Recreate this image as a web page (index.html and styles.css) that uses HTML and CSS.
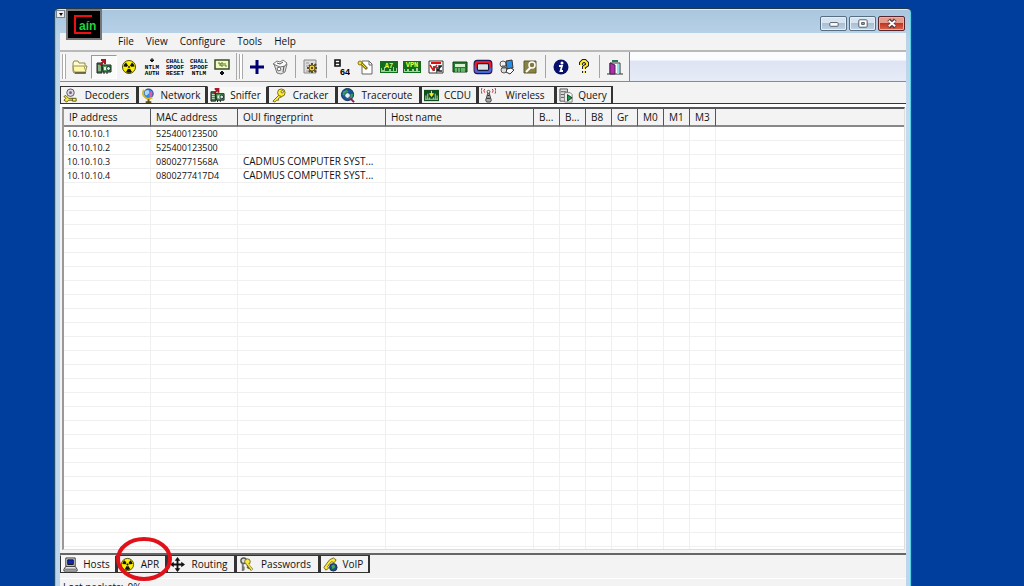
FILE: index.html
```html
<!DOCTYPE html>
<html lang="en">
<head>
<meta charset="utf-8">
<title>Cain</title>
<link rel="stylesheet" href="styles.css">
</head>
<body>
<svg class="defs" aria-hidden="true">
  <symbol id="folder" viewBox="0 0 16 16"><path d="M1 4l1-2h4l1 2h6v3h2l-2 7H2L1 12z" fill="#fffbd0" stroke="#8c8648"/><path d="M2 13L1 7h11l2 6z" fill="#fff8a4" stroke="#99945c"/><path d="M14 14H3" stroke="#222"/></symbol>
  <symbol id="sniffer" viewBox="0 0 16 16"><path d="M1 4h5v10H1z" fill="#3c7a47" stroke="#222"/><path d="M6 6h9v7H7z" fill="#4f9c58" stroke="#102d14"/><path d="M2 7h3M2 9h3M2 11h3" stroke="#d5ead5"/><path d="M8 8h3v3H8z" fill="#e6f3e6"/><circle cx="12.500" cy="9.500" r="2" fill="#d4edd4" stroke="#123"/><path d="M8 13v2M11 13v2" stroke="#111"/><path d="M4 6l4-4M5 1h4v4" fill="none" stroke="#a81622" stroke-width="2"/></symbol>
  <symbol id="nuke" viewBox="0 0 16 16"><circle cx="8" cy="8" r="6.500" fill="#fff200" stroke="#494900"/><path d="M8 8L2.500 7.500A6 6 0 0 1 5 3.500zM8 8l3-4.500a6 6 0 0 1 2.500 4zM8 8l3 5a6 6 0 0 1-6 0z" fill="#111"/><circle cx="8" cy="8" r="1.500" fill="#111" stroke="#fff200"/></symbol>
  <symbol id="board" viewBox="0 0 16 16"><path d="M1 1h14v9H1z" fill="#f3f9c1" stroke="#365026" stroke-width="1.500"/><path d="M4 4h2v3M7 4h2v3H7zM11 4v3h2" fill="none" stroke="#58772e"/><path d="M8 12l2 2-2 2-2-2z" fill="#111" stroke="#111"/></symbol>
  <symbol id="plus" viewBox="0 0 16 16"><path d="M8 1v14M1 8h14" stroke="#000072" stroke-width="3"/></symbol>
  <symbol id="bin" viewBox="0 0 16 16"><path d="M2 5l3 9 4 1 4-2 2-8z" fill="#e4e4e4" stroke="#777"/><path d="M1 5l4-3 3 1 3-2 4 3-2 3-5 1z" fill="#fafafa" stroke="#777"/><path d="M5 4l3 1 3-2M12 7l-1 6" stroke="#555" fill="none"/><path d="M5 9l3-1 1 3-3 1z" fill="#fff" stroke="#6b776b"/></symbol>
  <symbol id="config" viewBox="0 0 16 16"><path d="M1 1h12v13H1z" fill="#ddd" stroke="#888"/><path d="M3 4h3M3 7h2M3 12h3" stroke="#999"/><path d="M9 4v10M4 9h10M6 6l7 7M13 5l-7 8" stroke="#514b2d" stroke-width="2"/><circle cx="9" cy="9" r="3" fill="#f1cf35" stroke="#695719"/><circle cx="9" cy="9" r="1" fill="#222"/></symbol>
  <symbol id="keydoc" viewBox="0 0 16 16"><path d="M5 2h7l3 3v10H5z" fill="#fff" stroke="#666"/><path d="M12 2v4h3" fill="none" stroke="#666"/><path d="M4 4l6 6" stroke="#83751a" stroke-width="3"/><path d="M4 4l5 5" stroke="#f5df36"/><circle cx="3" cy="4" r="2" fill="#f5df36" stroke="#83751a"/></symbol>
  <symbol id="vnc" viewBox="0 0 16 16"><path d="M1 2h14v12H1z" fill="#fff" stroke="#333"/><path d="M3 4h10" stroke="#d11" stroke-width="2"/><path d="M6 7v5M9 8v4l4-5M14 7h-3v5h3" fill="none" stroke="#222" stroke-width="1.500"/><path d="M2 6l3 5 4-5" stroke="#d11" fill="none" stroke-width="1.500"/></symbol>
  <symbol id="token" viewBox="0 0 16 16"><path d="M1 3h14v10H1z" fill="#198229" stroke="#163b1b"/><path d="M3 5h10v3H3z" fill="#d7f0ce"/><path d="M3 10h2M6 10h2M9 10h4M3 12h2M6 12h2M9 12h4" stroke="#bde4b6"/></symbol>
  <symbol id="secur" viewBox="0 0 18 16"><rect x="1" y="2" width="16" height="12" rx="3" fill="#ef1827" stroke="#17175c"/><path d="M1.500 6v5q0 2.500 3 2.500h9q3 0 3-2.500V8L14 11H4z" fill="#4468df"/><rect x="4" y="5" width="10" height="6" rx="1" fill="#d8e3e4" stroke="#16193c"/></symbol>
  <symbol id="remote" viewBox="0 0 16 16"><circle cx="4" cy="5" r="3" fill="#eee" stroke="#555"/><circle cx="5" cy="11" r="3" fill="#ddd" stroke="#555"/><path d="M3 7h4M3 9h4" stroke="#555"/><path d="M7 2l6-1 1 8-6 1z" fill="#268de9" stroke="#333"/><path d="M8 10l4-1 3 2-4 4-4-2z" fill="#fff" stroke="#333"/></symbol>
  <symbol id="keybox" viewBox="0 0 16 16"><path d="M2 2h12v12H2z" fill="#898342" stroke="#5e5a2b"/><path d="M9 8l-5 5" stroke="#fff" stroke-width="2"/><circle cx="10" cy="6" r="3" fill="#817b3e" stroke="#fff" stroke-width="1.500"/></symbol>
  <symbol id="info" viewBox="0 0 16 16"><circle cx="8" cy="8" r="7.500" fill="#07116c"/><circle cx="9" cy="4" r="1.500" fill="#fff"/><path d="M6 7h3l-1.500 5H10" fill="none" stroke="#fff" stroke-width="1.800"/></symbol>
  <symbol id="help" viewBox="0 0 16 16"><path d="M5 6V4l2-2h2l2 2v2L8 8v2M8 12v2" fill="none" stroke="#222" stroke-width="4"/><path d="M5 6V4l2-2h2l2 2v2L8 8v2M8 12v2" fill="none" stroke="#ffe832" stroke-width="2"/></symbol>
  <symbol id="exit" viewBox="0 0 16 16"><path d="M0 15h16M3 15V4h10v11" fill="#fff" stroke="#333"/><path d="M3 4l5 2v9H3z" fill="#b329b4" stroke="#462646"/><path d="M5 1h6v2H5z" fill="#28765a"/><path d="M10 5h2v10h-2z" fill="#91e1e8"/></symbol>
  <symbol id="decoder" viewBox="0 0 16 16"><circle cx="8" cy="5" r="4" fill="#d9d9df" stroke="#555"/><circle cx="8" cy="5" r="1.500" fill="#7e4aad"/><path d="M3 8l3 3h5v2H6l-2 2-3-2 2-2-2-2z" fill="#ffea31" stroke="#5c5517"/><path d="M10 11h4v3h-4z" fill="#ffee4b" stroke="#5c5517"/></symbol>
  <symbol id="network" viewBox="0 0 16 16"><circle cx="8" cy="6" r="5" fill="#3985ec" stroke="#26337a"/><path d="M4 3l4-1 1 3-3 3-2-1z" fill="#a9dcf4"/><path d="M9 5l3-2v5l-3 2z" fill="#e45aa5"/><path d="M3 2C0 8 6 14 12 10" fill="none" stroke="#d2ba28" stroke-width="2"/><path d="M8 12v3M5 15h6" stroke="#5d5017" stroke-width="2"/></symbol>
  <symbol id="cracker" viewBox="0 0 16 16"><path d="M9 7l-7 7 2 1 2-2h2v-2l4-2" fill="#ffee39" stroke="#726819"/><circle cx="11" cy="5" r="4" fill="#ffed37" stroke="#726819"/><circle cx="12" cy="4" r="1.300" fill="#fff" stroke="#726819"/></symbol>
  <symbol id="trace" viewBox="0 0 16 16"><circle cx="8" cy="7" r="6.500" fill="#17559a" stroke="#172e54"/><path d="M3 4l4-2 2 2-2 3-4 1zM10 7l4-1-1 5-3 1z" fill="#31a551"/><circle cx="8" cy="8" r="3" fill="#d7f4ff" stroke="#283764"/><path d="M11 11l4 4" stroke="#8e174d" stroke-width="2"/></symbol>
  <symbol id="ccdu" viewBox="0 0 16 16"><path d="M0 2h16v12H0z" fill="#114e1d"/><path d="M2 12V8M4 12V6M6 12v-2M10 12v-2M12 12V6M14 12V8M1 12h14" stroke="#b6dba8"/><path d="M8 3v4M6 6l2 3 2-3z" fill="#ffed2d" stroke="#ffed2d"/></symbol>
  <symbol id="wireless" viewBox="0 0 16 16"><path d="M4 1L3 3l1 2M1 0L0 3l1 3M12 1l1 2-1 2M15 0l1 3-1 3" fill="none" stroke="#cc2028"/><path d="M8 3l3 10-1 2H6l-1-2z" fill="#aaa" stroke="#444"/><circle cx="8" cy="4" r="1.500" fill="#fff" stroke="#444"/><path d="M7 8h2M6 11h4" stroke="#222"/></symbol>
  <symbol id="query" viewBox="0 0 16 16"><path d="M1 1h8v13H1z" fill="#ddd" stroke="#555"/><path d="M2 4h6M2 7h6M2 10h4" stroke="#555"/><path d="M6 5h6l2 2v8H6z" fill="#fafafa" stroke="#777"/><path d="M9 7v7l5-3.500z" fill="#149a45" stroke="#143d20"/></symbol>
  <symbol id="host" viewBox="0 0 16 16"><path d="M3 1h10v9H3z" fill="#ddd" stroke="#333"/><path d="M5 3h6v5H5z" fill="#0b28c7" stroke="#111"/><path d="M3 10h10l2 3v2H1v-2z" fill="#e3e3e3" stroke="#333"/><path d="M2 13h12" stroke="#555"/></symbol>
  <symbol id="route" viewBox="0 0 16 16"><path d="M8 2v12M2 8h12" stroke="#111" stroke-width="2"/><path d="M8 0l3 4H5zM8 16l3-4H5zM0 8l4-3v6zM16 8l-4-3v6z" fill="#111"/></symbol>
  <symbol id="keys" viewBox="0 0 16 16"><circle cx="5" cy="4" r="3" fill="#ddd" stroke="#555" stroke-width="1.500"/><path d="M4 7v8M4 11h2M4 13h2" stroke="#777" stroke-width="2"/><circle cx="9" cy="5" r="3" fill="#f7e648" stroke="#70671d"/><path d="M9 8l5 6M11 10l-2 2" stroke="#70671d" stroke-width="3"/><path d="M9 7l5 7" stroke="#fff04b" stroke-width="1.500"/></symbol>
  <symbol id="phone" viewBox="0 0 16 16"><circle cx="11" cy="11" r="4" fill="#174b9a" stroke="#172b51"/><path d="M9 9l3-1 1 3-3 2z" fill="#3cad47"/><path d="M1 11l6-8 4-2 3 2-2 3-3-1-4 5 1 2-3 2z" fill="#ffec31" stroke="#6e661f"/></symbol>
</svg>

<main class="window">
  <header class="title">
    <button class="sysmenu" aria-label="System menu"></button>
    <svg class="logo" viewBox="0 0 36 31" role="img" aria-label="Cain"><path d="M1 1h34v29H1z" fill="#000" stroke="#777" stroke-width="2"/><path d="M26 7H9v17h16" fill="none" stroke="#ee1010" stroke-width="2"/><text x="13" y="21" class="logotext">aín</text></svg>
    <button class="control" aria-label="Minimize"><svg viewBox="0 0 26 14"><rect x="9" y="6" width="9" height="4" rx="1" fill="#fff" stroke="#4b5560"/></svg></button>
    <button class="control" aria-label="Maximize"><svg viewBox="0 0 26 14"><rect x="9" y="3" width="9" height="8" rx="1" fill="#fff" stroke="#4b5560"/><path d="M12 6h3v2h-3z" fill="#9eb1c5" stroke="#4b5560"/></svg></button>
    <button class="control close" aria-label="Close"><svg viewBox="0 0 26 14"><path d="M10 3l7 8M17 3l-7 8" stroke="#583939" stroke-width="4"/><path d="M10 4l7 6M17 4l-7 6" stroke="#fff" stroke-width="2"/></svg></button>
  </header>
  <div class="client">
    <nav class="menu" aria-label="Main"><button>File</button><button>View</button><button>Configure</button><button>Tools</button><button>Help</button></nav>
    <div class="toolbar">
      <div class="bar">
        <span class="grip"></span>
        <div class="group seven">
          <button aria-label="Open"><svg><use href="#folder"/></svg></button><button class="pressed" aria-label="Sniffer"><svg><use href="#sniffer"/></svg></button><button aria-label="APR"><svg><use href="#nuke"/></svg></button><button aria-label="NTLM auth"><svg class="wide" viewBox="0 0 20 18"><path d="M10 0v4M8 2h4l-2 2z" stroke="#111" fill="#111"/><text x="10" y="11" class="micro">NTLM</text><text x="10" y="17" class="micro">AUTH</text></svg></button><button aria-label="Challenge reset"><svg class="wide" viewBox="0 0 20 18"><text x="10" y="5" class="micro">CHALL</text><text x="10" y="11" class="micro">SPOOF</text><text x="10" y="17" class="micro">RESET</text></svg></button><button aria-label="Challenge NTLM"><svg class="wide" viewBox="0 0 20 18"><text x="10" y="5" class="micro">CHALL</text><text x="10" y="11" class="micro">SPOOF</text><text x="10" y="17" class="micro">NTLM</text></svg></button><button aria-label="Filter"><svg><use href="#board"/></svg></button>
        </div>
        <span class="line"></span><span class="grip second"></span>
        <div class="group two"><button aria-label="Add"><svg><use href="#plus"/></svg></button><button aria-label="Remove"><svg><use href="#bin"/></svg></button></div>
        <span class="sep"></span>
        <div class="group one"><button aria-label="Configure"><svg><use href="#config"/></svg></button></div>
        <span class="sep"></span>
        <div class="group nine">
          <button aria-label="Base64"><svg viewBox="0 0 16 16"><path d="M1 1h5v6H1zM1 4h5" fill="#fff" stroke="#111" stroke-width="1.600"/><text x="11" y="16" class="sixty">64</text></svg></button><button aria-label="Access decoder"><svg><use href="#keydoc"/></svg></button><button aria-label="Cisco type 7"><svg class="wide" viewBox="0 0 20 18"><path d="M1 3h18v12H1z" fill="#116d1b"/><path d="M2 14v-4h1v2h2v-3h1v4h4v-2h2v2h2V9h1v4h2v-3h1v4z" fill="#9dce98"/><text x="10" y="10" class="chip">A7</text></svg></button><button aria-label="VPN"><svg class="wide" viewBox="0 0 20 18"><path d="M1 3h18v12H1z" fill="#116d1b"/><path d="M2 14v-3h1v2h2v-2h2v2h3v-2h2v2h2v-3h2v3h2v1z" fill="#a8d39d"/><text x="10" y="9" class="chip">VPN</text></svg></button><button aria-label="VNC"><svg><use href="#vnc"/></svg></button><button aria-label="Token"><svg><use href="#token"/></svg></button><button aria-label="SecurID"><svg class="wide"><use href="#secur"/></svg></button><button aria-label="Remote desktop"><svg><use href="#remote"/></svg></button><button aria-label="Syskey"><svg><use href="#keybox"/></svg></button>
        </div>
        <span class="sep"></span>
        <div class="group two"><button aria-label="About"><svg><use href="#info"/></svg></button><button aria-label="Help"><svg><use href="#help"/></svg></button></div>
        <span class="sep"></span>
        <div class="group one"><button aria-label="Exit"><svg><use href="#exit"/></svg></button></div>
      </div>
    </div>
    <nav class="tabs top" aria-label="Tools">
      <button class="xl"><svg><use href="#decoder"/></svg><span>Decoders</span></button><button class="md"><svg><use href="#network"/></svg><span>Network</span></button><button class="sm active"><svg><use href="#sniffer"/></svg><span>Sniffer</span></button><button class="md"><svg><use href="#cracker"/></svg><span>Cracker</span></button><button class="xxl"><svg><use href="#trace"/></svg><span>Traceroute</span></button><button class="xs"><svg><use href="#ccdu"/></svg><span>CCDU</span></button><button class="xl"><svg><use href="#wireless"/></svg><span>Wireless</span></button><button class="xs"><svg><use href="#query"/></svg><span>Query</span></button>
    </nav>
    <section class="list">
      <table>
        <colgroup><col class="c-host"><col class="c-host"><col class="c-long"><col class="c-long"><col class="c-flag"><col class="c-flag"><col class="c-flag"><col class="c-flag"><col class="c-flag"><col class="c-flag"><col class="c-flag"><col></colgroup>
        <thead><tr><th>IP address</th><th>MAC address</th><th>OUI fingerprint</th><th>Host name</th><th>B...</th><th>B...</th><th>B8</th><th>Gr</th><th>M0</th><th>M1</th><th>M3</th><th></th></tr></thead>
        <tbody>
          <tr><td class="num">10.10.10.1</td><td class="num">525400123500</td><td></td><td></td><td></td><td></td><td></td><td></td><td></td><td></td><td></td><td></td></tr>
          <tr><td class="num">10.10.10.2</td><td class="num">525400123500</td><td></td><td></td><td></td><td></td><td></td><td></td><td></td><td></td><td></td><td></td></tr>
          <tr><td class="num">10.10.10.3</td><td class="num">08002771568A</td><td>CADMUS COMPUTER SYST...</td><td></td><td></td><td></td><td></td><td></td><td></td><td></td><td></td><td></td></tr>
          <tr><td class="num">10.10.10.4</td><td class="num">0800277417D4</td><td>CADMUS COMPUTER SYST...</td><td></td><td></td><td></td><td></td><td></td><td></td><td></td><td></td><td></td></tr>
          <tr class="rest"><td></td><td></td><td></td><td></td><td></td><td></td><td></td><td></td><td></td><td></td><td></td><td></td></tr>
        </tbody>
      </table>
    </section>
    <nav class="tabs bottom" aria-label="Sniffer views">
      <button class="xs active"><svg><use href="#host"/></svg><span>Hosts</span></button><button class="tiny marked"><svg><use href="#nuke"/></svg><span>APR</span><svg class="ring" viewBox="0 0 58 46"><ellipse cx="29" cy="23" rx="26" ry="20" fill="none" stroke="#e01119" stroke-width="4"/></svg></button><button class="md"><svg><use href="#route"/></svg><span>Routing</span></button><button class="xxl"><svg><use href="#keys"/></svg><span>Passwords</span></button><button class="tiny"><svg><use href="#phone"/></svg><span>VoIP</span></button>
    </nav>
    <footer class="status"><span>Lost packets:</span><span>0%</span></footer>
  </div>
</main>
</body>
</html>
```
FILE: styles.css
```css
* { box-sizing: border-box; }
body { margin: 0; height: 100vh; overflow: hidden; background: #003e9e; color: #111; font: 10px/14px "Open Sans", "Noto Sans", sans-serif; }
button { margin: 0; padding: 0; border: 0; background: transparent; color: inherit; font: inherit; }
svg { display: block; flex: none; width: 16px; height: 16px; }
.defs { position: absolute; width: 0; height: 0; }
.micro { font: bold 6px "Liberation Mono", monospace; text-anchor: middle; }
.chip { font: bold 7px "Liberation Mono", monospace; fill: #eaff38; text-anchor: middle; }
.sixty { font: bold 9px "Liberation Sans", sans-serif; text-anchor: middle; }
.logotext { font: bold 12px "Liberation Sans", sans-serif; fill: #20d43b; }

.window { display: flex; flex-direction: column; height: 100vh; margin: 8px 112px 0 54px; padding: 0 5px; border: 1px solid #1c4c70; border-top-color: #243848; border-radius: 5px 5px 0 0; background: linear-gradient(#a9c6de, #bad3e9 30px, #c5dbef 110px, #bcd6ed); box-shadow: inset 1px 0 #78c8ed, inset -1px 0 #54d0e8, inset 0 1px #dceaf6; }
.title { position: relative; display: flex; flex: none; align-items: center; justify-content: flex-end; gap: 2px; height: 24px; padding: 5px 1px 0; }
.sysmenu { position: absolute; left: -4px; top: 1px; width: 9px; height: 8px; border: 1px solid #76838e; background: #eee; }
.sysmenu::after { content: ""; display: block; width: 0; margin: auto; border: 2px solid transparent; border-top: 3px solid #111; border-bottom: 0; }
.logo { position: absolute; left: 6px; top: 0; width: 36px; height: 31px; }
.control { width: 27px; height: 15px; border: 1px solid #596d80; border-radius: 2px; background: linear-gradient(#d6e4f1 45%, #a9bfd4 50%, #bfd3e5); box-shadow: inset 0 0 0 1px #e5eff7; }
.control svg { width: 100%; height: 100%; }
.close { border-color: #57262a; background: linear-gradient(#e49c8e 45%, #c33420 50%, #d96950); box-shadow: inset 0 0 0 1px #eab2a8; }

.client { display: flex; flex: 1; flex-direction: column; min-height: 0; background: #f3f3f3; }
.menu { display: flex; flex: none; gap: 12px; height: 19px; padding: 1px 0 2px 58px; border-bottom: 2px solid #b9b9b9; }
.toolbar { flex: none; height: 30px; border-bottom: 1px solid #858b94; background: linear-gradient(#fbfcfe 8px, #dee4f3 9px, #e6ebf7); }
.bar { display: flex; align-items: center; width: max-content; height: 29px; padding-right: 2px; border-right: 1px solid #888; background: #f3f3f3; }
.group { display: flex; height: 24px; }
.group button { display: grid; flex: 1; place-items: center; min-width: 0; }
.seven { width: 166px; }
.nine { width: 212px; }
.two { width: 47px; }
.one { width: 24px; }
.group .pressed { border: 1px solid #fff; border-top-color: #999; border-left-color: #999; background: #fafafa; }
.group .wide { width: 20px; height: 18px; }
.grip { width: 4px; height: 25px; margin: 0 2px; border: 1px solid #aaa; border-width: 0 1px; background: #fff; }
.line { width: 1px; height: 27px; margin-left: 2px; background: #aaa; }
.sep { width: 1px; height: 23px; margin: 0 3px; background: #a4a4a4; }

.tabs { display: flex; flex: none; }
.top { height: 22px; padding-top: 4px; border-bottom: 1px solid #35353b; }
.tabs button { display: flex; flex: none; align-items: center; height: 18px; padding: 0 4px 0 2px; border: 1px solid #333; border-right-width: 2px; }
.tabs button svg { width: 15px; height: 15px; }
.tabs button span { flex: 1; padding-left: 4px; text-align: center; }
.tabs .active { background: #f8f8f8; }
.top .active { border-top-color: #f3f3f3; }
.xxl { width: 84px; }
.xl { width: 78px; }
.md { width: 69px; }
.sm { width: 61px; }
.xs { width: 57px; }
.tabs .tiny { width: 50px; }

.list { display: flex; flex: 1; min-height: 0; padding: 0 1px 0 2px; border-top: 3px solid #fff; background: #f3f3f3; }
table { width: 100%; height: 100%; border: 2px solid #999; border-top-color: #55575a; border-right: 1px solid #ddd; border-bottom: 1px solid #ddd; border-collapse: separate; border-spacing: 0; table-layout: fixed; background: #fff; }
th, td { overflow: hidden; padding: 0 0 0 5px; font-weight: normal; text-align: left; white-space: nowrap; }
th { height: 18px; border-right: 1px solid #555; border-bottom: 2px solid #888; background: #f3f3f3; }
th:last-child, td:last-child { border-right: 0; }
td { height: 14px; border-right: 1px solid #f0f0f0; border-bottom: 1px solid #f0f0f0; line-height: 13px; }
td:first-child { padding-left: 3px; }
.num { font-size: 9px; }
.rest td { height: auto; border-bottom: 0; background: repeating-linear-gradient(#fff 0 13px, #f0f0f0 13px 14px); }
.c-host { width: 87px; }
.c-long { width: 148px; }
.c-flag { width: 26px; }

.bottom { height: 25px; margin-top: 3px; border-top: 2px solid #666; }
.bottom .active { border-top-color: #f3f3f3; }
.bottom .marked { position: relative; }
.bottom .ring { position: absolute; left: -3px; top: -20px; width: 58px; height: 46px; }
.status { display: flex; flex: none; gap: 4px; height: 15px; padding: 1px 3px 0; border-top: 1px solid #fff; }
```
